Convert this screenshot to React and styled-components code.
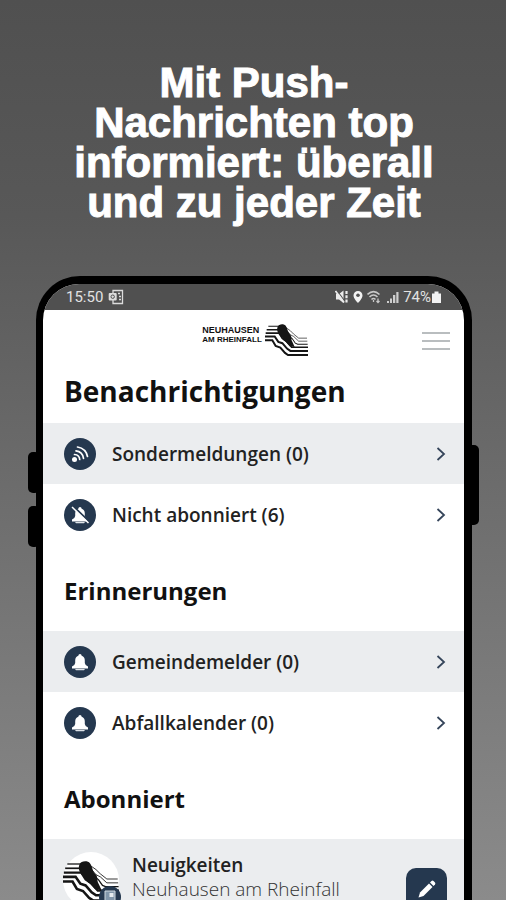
import React from "react";
import styled, { createGlobalStyle } from "styled-components";

const NAVY = "#25384f";

const GlobalStyle = createGlobalStyle`
  *, *::before, *::after { box-sizing: border-box; }
  body { margin: 0; background: #8b8b8b; }
`;

const Stage = styled.div`
  height: 100vh;
  overflow: hidden;
  display: flex;
  flex-direction: column;
  padding: 63px 34px 0 36px;
  background: linear-gradient(#505050, #585858 24%, #8b8b8b);
  font-family: "Open Sans", sans-serif;
`;

const Headline = styled.h1`
  margin: 0 auto 53px;
  max-width: 380px;
  color: #fff;
  text-align: center;
  font: 700 42px/40px "Liberation Sans", Arial, sans-serif;
  -webkit-text-stroke: 1px #fff;
`;

const Phone = styled.div`
  position: relative;
  flex: 1 0 auto;
  border: solid #000;
  border-width: 8px 8px 0 7px;
  border-radius: 44px 44px 0 0;
  background: #000;
`;

const SideButton = styled.span`
  position: absolute;
  top: ${(p) => p.$top}px;
  ${(p) => p.$side}: -15px;
  width: 12px;
  height: ${(p) => p.$height}px;
  border-radius: 5px;
  background: #000;
`;

const Screen = styled.div`
  overflow: hidden;
  min-height: 100%;
  border-radius: 36px 36px 0 0;
  background: #fff;
`;

const StatusBar = styled.div`
  display: flex;
  align-items: center;
  justify-content: space-between;
  height: 26px;
  padding: 0 23px;
  background: #505050;
  color: #e2e2e2;
  font: 400 15px/26px Roboto, sans-serif;
`;

const StatusGroup = styled.div`
  display: flex;
  align-items: center;
  gap: ${(p) => p.$gap}px;
`;

const TopBar = styled.header`
  display: grid;
  grid-template-columns: 1fr auto 1fr;
  align-items: center;
  height: 61px;
  padding: 0 14px;
`;

const Brand = styled.a`
  grid-column: 2;
  display: flex;
  align-items: flex-start;
  gap: 3px;
  padding-left: 3px;
  color: #111;
  text-decoration: none;
`;

const BrandName = styled.span`
  display: flex;
  flex-direction: column;
  padding-top: 1px;
  white-space: nowrap;
  font: 700 9px/10px "Liberation Sans", Arial, sans-serif;
`;

const BrandPlace = styled.span`
  font-size: 8px;
  line-height: 9px;
`;

const MenuButton = styled.button`
  justify-self: end;
  display: flex;
  padding: 0;
  border: 0;
  background: none;
`;

const PageTitle = styled.h2`
  margin: 0 0 12px;
  padding: 0 21px;
  color: #111;
  font-size: 28px;
  font-weight: 700;
  line-height: 40px;
`;

const SectionTitle = styled.h3`
  display: flex;
  align-items: center;
  margin: 0;
  height: 86px;
  padding: 5px 21px 0;
  color: #111;
  font-size: 24px;
  font-weight: 700;
`;

const List = styled.ul`
  margin: 0;
  padding: 0;
  list-style: none;
`;

const Item = styled.li`
  background: ${(p) => (p.$shaded ? "#ebedef" : "#fff")};
`;

const RowLink = styled.a`
  display: flex;
  align-items: center;
  gap: 16px;
  height: 61px;
  padding: 0 18px 0 21px;
  color: #222;
  text-decoration: none;
  font-size: 19px;
  font-weight: 600;
`;

const RowLabel = styled.span`
  flex: 1;
`;

const Disc = styled.span`
  display: grid;
  place-items: center;
  width: 32px;
  height: 32px;
  border-radius: 50%;
  background: ${NAVY};
`;

const NewsRow = styled.article`
  display: flex;
  align-items: flex-start;
  gap: 13px;
  height: 80px;
  padding: 13px 17px 0 20px;
  background: #ebedef;
`;

const Avatar = styled.div`
  position: relative;
  display: grid;
  justify-items: center;
  align-items: start;
  padding-top: 9px;
  width: 56px;
  height: 56px;
  border-radius: 50%;
  background: #fff;
`;

const AvatarBadge = styled.span`
  position: absolute;
  right: -2px;
  bottom: 0;
  display: grid;
  place-items: center;
  width: 22px;
  height: 22px;
  border-radius: 50%;
  background: ${NAVY};
`;

const NewsText = styled.div`
  flex: 1;
  padding-top: 1px;
  white-space: nowrap;
  font-size: 19px;
  font-weight: 300;
  line-height: 24px;
  color: #333;
`;

const NewsTitle = styled.strong`
  display: block;
  font-weight: 600;
  color: #222;
`;

const EditButton = styled.button`
  display: grid;
  place-items: center;
  width: 41px;
  height: 42px;
  margin-top: 16px;
  padding: 0;
  border: 0;
  border-radius: 10px;
  background: ${NAVY};
`;

function FallsMark({ width, height }) {
  return (
    <svg width={width} height={height} viewBox="0 0 129 98" preserveAspectRatio="none" fill="none" stroke="#151515" aria-hidden="true">
      <g strokeWidth="3">
        <path d="M10 7H45" />
        <path d="M5 17H45" strokeWidth="4" />
        <path d="M62 10L76 20L86 30L101 42H126" strokeWidth="2" />
        <path d="M66 20L76 32L86 37L101 51H127" strokeWidth="2" />
        <path d="M70 34L82 44L91 57L98 60H128" />
      </g>
      <g strokeWidth="6">
        <path d="M2 27H42L52 43L66 53L80 69H129" strokeWidth="5" />
        <path d="M0 37H29L40 53L52 57L66 73L76 80H129" />
        <path d="M0 48H22L32 65L46 70L60 86L69 92H129" />
      </g>
      <path d="M38 8C41 -1 57 -2 62 5C68 13 67 22 74 30C82 37 77 46 82 53L89 68L74 66L61 52C52 47 55 41 46 35C38 29 34 17 38 8Z" fill="#151515" stroke="none" />
    </svg>
  );
}

function OfficeIcon() {
  return (
    <svg width="16" height="16" viewBox="0 0 16 16" fill="none" stroke="#dcdcdc" aria-hidden="true">
      <path d="M5 4V1.500H14.500V14.500H5V11M10 4.500H12M11 7.500H13M11 10.500H13" strokeWidth="1.300" />
      <rect x="0.700" y="4" width="8" height="7.500" rx="1" fill="#dcdcdc" stroke="none" />
      <circle cx="4.700" cy="7.700" r="1.700" stroke="#505050" />
    </svg>
  );
}

function MuteIcon() {
  return (
    <svg width="14" height="14" viewBox="0 0 14 14" aria-hidden="true">
      <path d="M1 4H4L8.500 0.500V13L4 9.500H1Z" fill="#ececec" />
      <path d="M2 0.500L10 11.500" stroke="#505050" strokeWidth="1.200" />
      <path d="M0.500 1L9 12.500" stroke="#ececec" strokeWidth="1.800" />
      <path d="M11.500 1V13" stroke="#ececec" strokeWidth="2.200" strokeDasharray="3 1.200" />
    </svg>
  );
}

function PinIcon() {
  return (
    <svg width="10" height="14" viewBox="0 0 10 14" aria-hidden="true">
      <path d="M5 1A4.500 4.500 0 0 0 .5 5.500C.5 8.500 5 13 5 13S9.500 8.500 9.500 5.500A4.500 4.500 0 0 0 5 1Z" fill="#f2f2f2" />
      <circle cx="5" cy="5.300" r="1.800" fill="#505050" />
    </svg>
  );
}

function WifiIcon() {
  return (
    <svg width="15" height="14" viewBox="0 0 15 14" fill="none" stroke="#c8c8c8" strokeWidth="1.600" aria-hidden="true">
      <path d="M.5 4.500Q6.500-1.200 12.500 4.500M2.500 7Q6.500 3 10.500 7M4.500 9.500Q6.500 7.500 8.500 9.500" />
      <path d="M6.500 12V10M11 8.500V12.500M9.500 11L11 12.500L12.500 11" strokeWidth="1.300" />
    </svg>
  );
}

function SignalIcon() {
  return (
    <svg width="13" height="13" viewBox="0 0 13 13" fill="#cecece" aria-hidden="true">
      <path d="M1 10H3V12H1ZM4 7.500H6V12H4ZM7 4H9.300V12H7Z" />
      <path d="M10.300 1H12.500V12H10.300Z" />
    </svg>
  );
}

function BatteryIcon() {
  return (
    <svg width="9" height="12" viewBox="0 0 9 12" fill="#f2f2f2" aria-hidden="true">
      <path d="M2.500 .5H6.500V2.500H9V12H0V2.500H2.500Z" />
    </svg>
  );
}

function MenuIcon() {
  return (
    <svg width="28" height="20" viewBox="0 0 28 20" stroke="#a3a8ab" strokeWidth="1.600" aria-hidden="true">
      <path d="M0 2H28M0 10H28M0 18H28" />
    </svg>
  );
}

function FeedIcon() {
  return (
    <svg width="20" height="20" viewBox="0 0 20 20" fill="none" stroke="#fff" strokeWidth="1.700" strokeLinecap="round" aria-hidden="true">
      <circle cx="4.500" cy="15.500" r="2.500" fill="#fff" stroke="none" />
      <path d="M4.500 10.500Q9.500 10.800 9.700 15.500M6 6.800Q12.500 7.500 13.500 14.300M7.500 3Q16 4.500 17.500 12.500" />
    </svg>
  );
}

function BellIcon({ off }) {
  return (
    <svg width="20" height="20" viewBox="0 0 20 20" aria-hidden="true">
      <path d="M10 2Q11.500 2 11.700 3.800Q14.800 5 14.800 8.500V11Q15 13 18 14.500V16.500H2V14.500Q5 13 5.200 11V8.500Q5.200 5 8.300 3.800Q8.500 2 10 2Z" fill="#fff" />
      <path d="M5 17H15L14 18.200H6Z" fill="#dfe4e9" />
      {off && <path d="M3.500 1.500L18.500 16" stroke={NAVY} strokeWidth="2" />}
      {off && <path d="M2 2L18.500 18" stroke="#fff" strokeWidth="1.500" />}
    </svg>
  );
}

function Chevron() {
  return (
    <svg width="10" height="14" viewBox="0 0 10 14" fill="none" stroke="#35455a" strokeWidth="1.800" aria-hidden="true">
      <path d="M1.500 1L8 7L1.500 13" />
    </svg>
  );
}

function PaperIcon() {
  return (
    <svg width="12" height="14" viewBox="0 0 12 14" aria-hidden="true">
      <path d="M1 1H11V13H1Z" fill="#8196aa" stroke="#d0d9e0" />
      <path d="M5.500 3H9.500V7H5.500Z" fill="#e6ebef" />
    </svg>
  );
}

function PencilIcon() {
  return (
    <svg width="20" height="20" viewBox="0 0 20 20" fill="#fff" aria-hidden="true">
      <path d="M1.500 18.500L3 13.500L12 4.500L15.500 8L6.500 17Z" />
      <path d="M13 3.500L14.500 2Q15.500 1.200 16.500 2L18 3.500Q18.800 4.500 18 5.500L16.500 7Z" />
    </svg>
  );
}

function Row({ icon, label, shaded }) {
  return (
    <Item $shaded={shaded}>
      <RowLink href="#">
        <Disc>{icon}</Disc>
        <RowLabel>{label}</RowLabel>
        <Chevron />
      </RowLink>
    </Item>
  );
}

export default function App() {
  return (
    <Stage>
      <GlobalStyle />
      <Headline>Mit Push-Nachrichten top informiert: überall und zu jeder Zeit</Headline>
      <Phone>
        <SideButton $side="left" $top={168} $height={41} />
        <SideButton $side="left" $top={222} $height={41} />
        <SideButton $side="right" $top={161} $height={80} />
        <Screen>
          <StatusBar>
            <StatusGroup $gap={5}>
              <span>15:50</span>
              <OfficeIcon />
            </StatusGroup>
            <StatusGroup $gap={4}>
              <MuteIcon />
              <PinIcon />
              <WifiIcon />
              <SignalIcon />
              <StatusGroup $gap={1}>
                <span>74%</span>
                <BatteryIcon />
              </StatusGroup>
            </StatusGroup>
          </StatusBar>
          <TopBar>
            <Brand href="#">
              <BrandName>
                <span>NEUHAUSEN</span>
                <BrandPlace>AM RHEINFALL</BrandPlace>
              </BrandName>
              <FallsMark width={43} height={33} />
            </Brand>
            <MenuButton aria-label="Menü">
              <MenuIcon />
            </MenuButton>
          </TopBar>
          <PageTitle>Benachrichtigungen</PageTitle>
          <List>
            <Row icon={<FeedIcon />} label="Sondermeldungen (0)" shaded />
            <Row icon={<BellIcon off />} label="Nicht abonniert (6)" />
          </List>
          <SectionTitle>Erinnerungen</SectionTitle>
          <List>
            <Row icon={<BellIcon />} label="Gemeindemelder (0)" shaded />
            <Row icon={<BellIcon />} label="Abfallkalender (0)" />
          </List>
          <SectionTitle>Abonniert</SectionTitle>
          <NewsRow>
            <Avatar>
              <FallsMark width={56} height={42} />
              <AvatarBadge>
                <PaperIcon />
              </AvatarBadge>
            </Avatar>
            <NewsText>
              <NewsTitle>Neuigkeiten</NewsTitle>
              Neuhausen am Rheinfall
            </NewsText>
            <EditButton aria-label="Bearbeiten">
              <PencilIcon />
            </EditButton>
          </NewsRow>
        </Screen>
      </Phone>
    </Stage>
  );
}
